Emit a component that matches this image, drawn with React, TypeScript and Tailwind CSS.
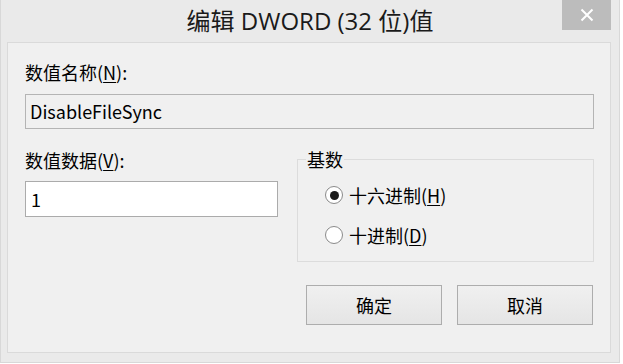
import React from "react";

const font = { fontFamily: '"Noto Sans CJK SC", "Noto Sans", sans-serif' };
const titleFont = { fontFamily: '"Open Sans", "Noto Sans CJK SC", sans-serif' };

function Radio({ checked, label, hot }: { checked: boolean; label: string; hot: string }) {
  return (
    <div className="flex items-center h-[24px]">
      <span className="w-[18px] h-[18px] rounded-full border border-[#8a8a8a] bg-white flex items-center justify-center">
        {checked && <span className="w-[9px] h-[9px] rounded-full bg-[#1c1c1c]" />}
      </span>
      <span className="ml-[6px] text-[18px] leading-[24px] text-black">
        {label}(<span className="underline underline-offset-2">{hot}</span>)
      </span>
    </div>
  );
}

export default function App() {
  return (
    <div style={font} className="w-[620px] h-[363px] bg-[#eaeaea] border-l border-r border-b border-[#d8d8d8] flex flex-col">
      <div className="h-[42px] grid grid-cols-[58px_1fr_58px] items-start">
        <div />
        <div style={titleFont} className="h-[42px] flex items-center justify-center text-[24px] leading-[30px] text-[#1a1a1a] whitespace-nowrap">
          编辑 DWORD (32 位)值
        </div>
        <div className="flex justify-start pl-[1px]">
          <div className="w-[49px] h-[30px] bg-[#bcbcbc] flex items-center justify-center">
            <svg width="14" height="14" viewBox="0 0 14 14">
              <path d="M1.5 1.5 L12.5 12.5 M12.5 1.5 L1.5 12.5" stroke="white" strokeWidth="2" />
            </svg>
          </div>
        </div>
      </div>
      <div className="ml-[6px] w-[604px] h-[311px] bg-[#f0f0f0] border border-[#dadada] pl-[17px] pr-[16px] pt-[17px] flex flex-col text-black">
        <div className="text-[18px] leading-[24px]">
          数值名称(<span className="underline underline-offset-2">N</span>):
        </div>
        <div className="mt-[10px] h-[35px] border border-[#b4b4b4] bg-[#f0f0f0] flex items-center pl-[4px] text-[18px]">
          DisableFileSync
        </div>
        <div className="mt-[18px] flex items-start">
          <div className="w-[253px] flex flex-col">
            <div className="text-[18px] leading-[24px] mt-[1px]">
              数值数据(<span className="underline underline-offset-2">V</span>):
            </div>
            <div className="mt-[9px] h-[36px] border border-[#ababab] bg-white flex items-center pl-[5px] text-[18px]">
              1
            </div>
          </div>
          <fieldset className="ml-[19px] w-[297px] h-[115px] border border-[#dcdcdc] pl-[27px] pt-[12px]">
            <legend className="ml-[-19px] px-[1px] text-[18px] leading-[24px]">基数</legend>
            <div className="flex flex-col gap-[16px]">
              <Radio checked label="十六进制" hot="H" />
              <Radio checked={false} label="十进制" hot="D" />
            </div>
          </fieldset>
        </div>
        <div className="mt-[23px] flex justify-end gap-[15px] pr-[1px]">
          <button className="w-[136px] h-[40px] border border-[#adadad] bg-gradient-to-b from-[#f0f0f0] to-[#e5e5e5] text-[18px]">
            确定
          </button>
          <button className="w-[136px] h-[40px] border border-[#adadad] bg-gradient-to-b from-[#f0f0f0] to-[#e5e5e5] text-[18px]">
            取消
          </button>
        </div>
      </div>
    </div>
  );
}
